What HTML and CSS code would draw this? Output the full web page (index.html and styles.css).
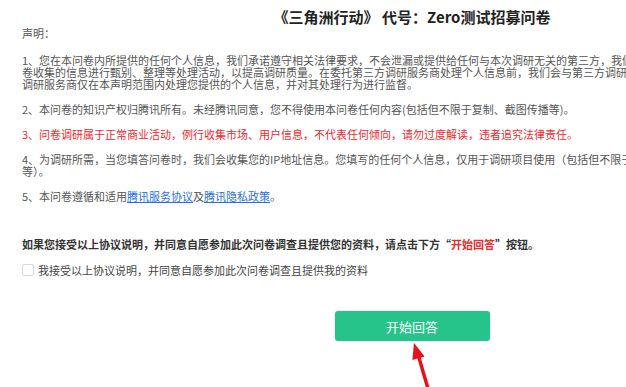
FILE: index.html
```html
<!DOCTYPE html>
<html lang="zh-CN">
<head>
    <meta charset="UTF-8">
    <meta name="viewport" content="width=device-width, initial-scale=1.0">
    <title>《三角洲行动》 代号：Zero测试招募问卷</title>
    <link rel="stylesheet" href="styles.css">
</head>
<body>
    <div class="survey">
        <h1 class="survey-title">《三角洲行动》 代号：Zero测试招募问卷</h1>

        <div class="notice">
            <p class="notice-head">声明：</p>
            <p>1、您在本问卷内所提供的任何个人信息，我们承诺遵守相关法律要求，不会泄漏或提供给任何与本次调研无关的第三方，我们可能委托第三方调研服务商对本问卷收集的信息进行甄别、整理等处理活动，以提高调研质量。在委托第三方调研服务商处理个人信息前，我们会与第三方调研服务商签署保密协议，要求第三方调研服务商仅在本声明范围内处理您提供的个人信息，并对其处理行为进行监督。</p>
            <p>2、本问卷的知识产权归腾讯所有。未经腾讯同意，您不得使用本问卷任何内容(包括但不限于复制、截图传播等)。</p>
            <p class="warn">3、问卷调研属于正常商业活动，例行收集市场、用户信息，不代表任何倾向，请勿过度解读，违者追究法律责任。</p>
            <p>4、为调研所需，当您填答问卷时，我们会收集您的IP地址信息。您填写的任何个人信息，仅用于调研项目使用（包括但不限于数据统计分析、测试资格筛选发放等）。</p>
            <p>5、本问卷遵循和适用<a href="#">腾讯服务协议</a>及<a href="#">腾讯隐私政策</a>。</p>
        </div>

        <p class="agree-tip">如果您接受以上协议说明，并同意自愿参加此次问卷调查且提供您的资料，请点击下方“<span class="hl">开始回答</span>”按钮。</p>

        <label class="agree-check">
            <input type="checkbox" id="agree">
            <span>我接受以上协议说明，并同意自愿参加此次问卷调查且提供我的资料</span>
        </label>

        <div class="start-wrap">
            <button class="start-btn">开始回答</button>
        </div>
    </div>

    <svg class="arrow" width="626" height="387" viewBox="0 0 626 387">
        <line x1="418.5" y1="356" x2="429" y2="392" stroke="#e5141b" stroke-width="3.5"/>
        <polygon points="414,343 424.6,356.4 412.4,360" fill="#e5141b"/>
    </svg>
</body>
</html>
```

FILE: styles.css
```css
html, body {
    overflow: hidden;
}
body {
    margin: 0;
    background-color: #ffffff;
    font-family: "Noto Sans CJK SC", "Microsoft YaHei", sans-serif;
    color: #555555;
}
.survey {
    width: 780px;
    padding: 7px 0 0 22px;
}
.survey-title {
    margin: 0;
    font-size: 15px;
    line-height: 20px;
    font-weight: bold;
    color: #222222;
    text-align: center;
}
.notice {
    font-size: 11px;
    line-height: 12px;
}
.notice p {
    margin: 0 0 13px;
}
.notice .notice-head {
    margin-bottom: 15px;
}
.notice .warn {
    color: #f0282d;
}
.notice a {
    color: #2a72d8;
    text-decoration: underline;
}
.agree-tip {
    margin: 36px 0 0;
    font-size: 11px;
    line-height: 12px;
    font-weight: bold;
    color: #333333;
}
.agree-tip .hl {
    color: #f0282d;
}
.agree-check {
    display: flex;
    align-items: center;
    height: 14px;
    margin-top: 13px;
    font-size: 11px;
    color: #444444;
}
.agree-check input {
    appearance: none;
    width: 12px;
    height: 12px;
    margin: 0 4px 0 0;
    border: 1px solid #dadada;
    border-radius: 2px;
    background: #ffffff;
}
.start-wrap {
    display: flex;
    justify-content: center;
    margin-top: 34px;
}
.start-btn {
    width: 155px;
    height: 30px;
    border: none;
    border-radius: 3px;
    background-color: #26c48a;
    color: #ffffff;
    font-family: inherit;
    font-size: 13px;
    cursor: pointer;
    box-shadow: 0 1px 2px rgba(0, 0, 0, 0.08);
}
.arrow {
    position: absolute;
    left: 0;
    top: 0;
    pointer-events: none;
}
```
